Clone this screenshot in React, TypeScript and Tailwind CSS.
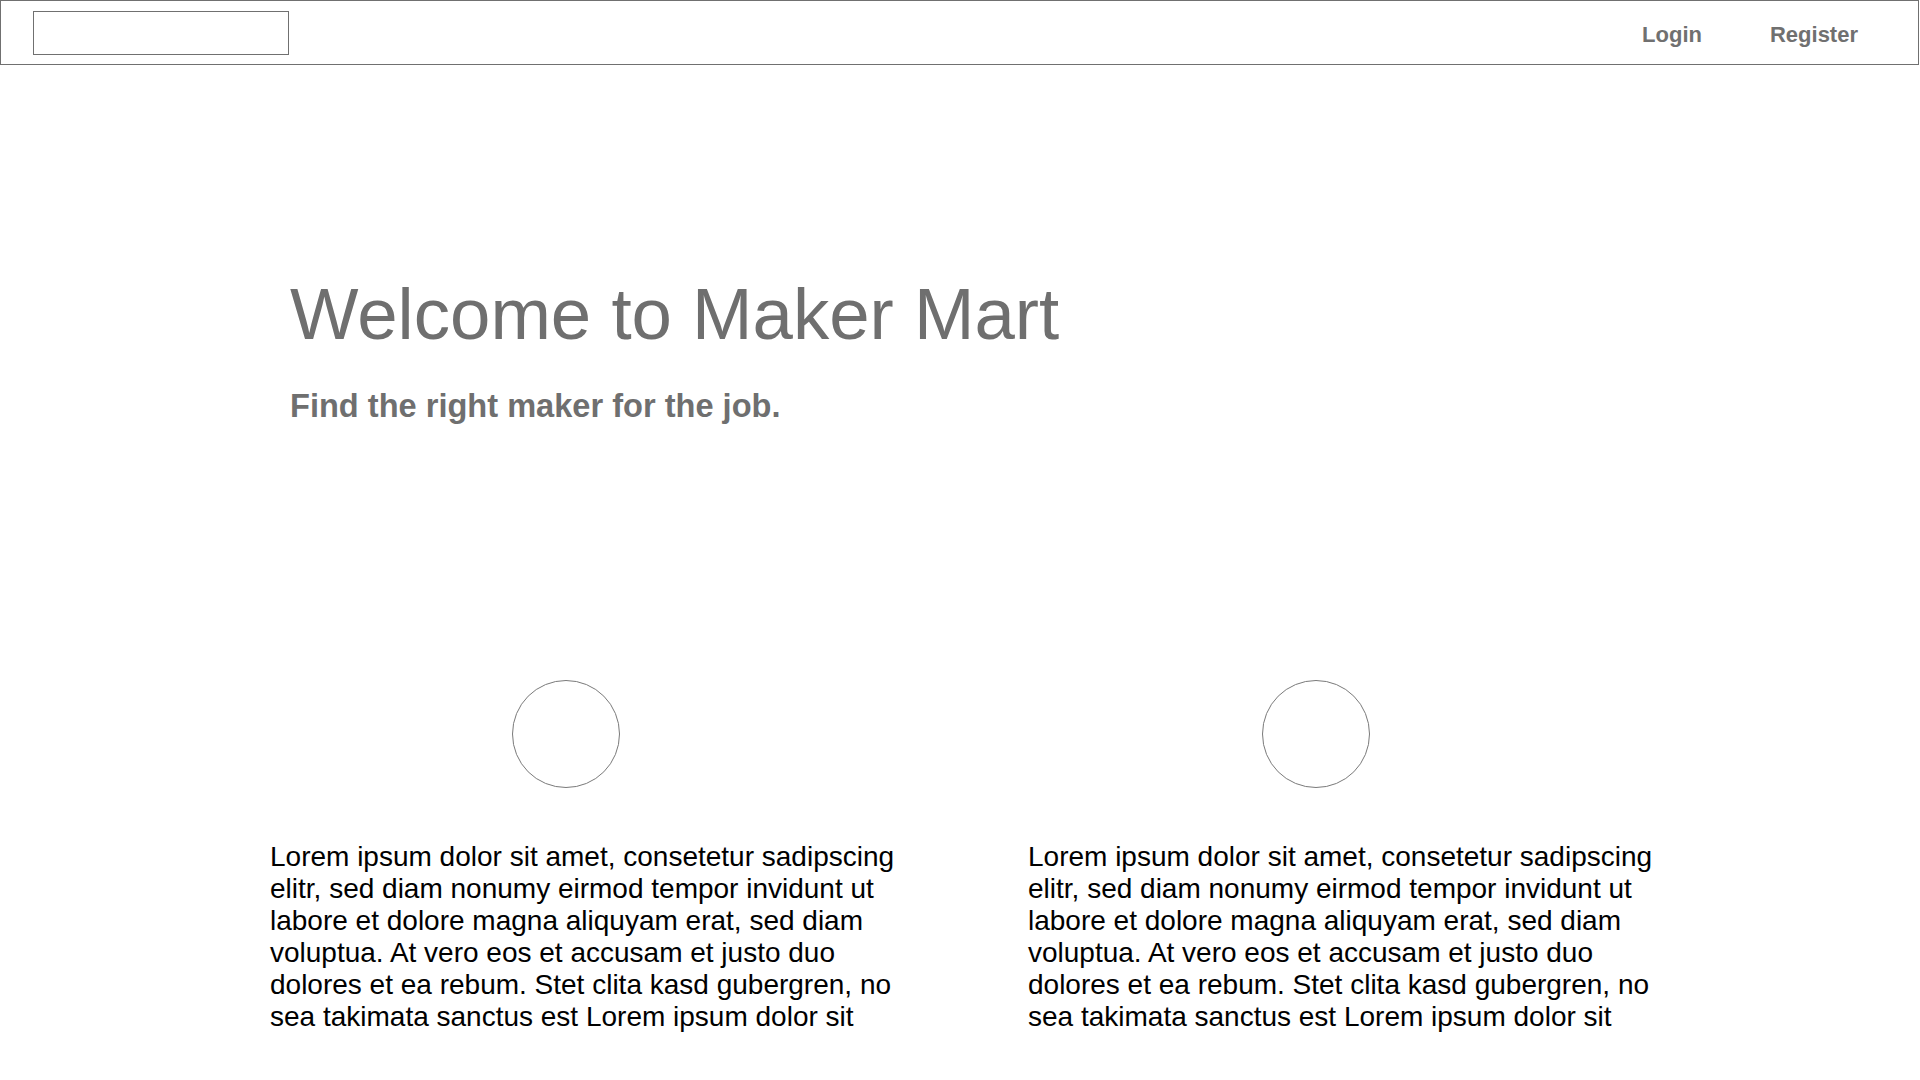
import React from 'react';

const lorem =
  'Lorem ipsum dolor sit amet, consetetur sadipscing elitr, sed diam nonumy eirmod tempor invidunt ut labore et dolore magna aliquyam erat, sed diam voluptua. At vero eos et accusam et justo duo dolores et ea rebum. Stet clita kasd gubergren, no sea takimata sanctus est Lorem ipsum dolor sit';

function Feature({ offset }: { offset: string }) {
  return (
    <div className="flex flex-col">
      <div className={`${offset} w-[108px] h-[108px] rounded-full border border-[#7a7a7a]`} />
      <p className="mt-[53px] text-[28px] leading-[32px] text-black">{lorem}</p>
    </div>
  );
}

export default function App() {
  return (
    <div className="min-h-screen w-full bg-white font-['Liberation_Sans',Arial,sans-serif]">
      {/* Top bar */}
      <header className="w-[1919px] h-[65px] border border-[#707070] flex items-center justify-between pl-[32px] pr-[60px]">
        <div className="w-[256px] h-[44px] border border-[#707070]" />
        <nav className="flex items-center gap-[68px] pt-[3px] text-[22px] font-bold text-[#707070]">
          <a>Login</a>
          <a>Register</a>
        </nav>
      </header>

      {/* Hero */}
      <section className="pl-[290px] pt-[213px] flex flex-col gap-[39px] text-[#6f6f6f]">
        <h1 className="text-[72.6px] leading-none font-normal">Welcome to Maker Mart</h1>
        <h2 className="text-[32.6px] leading-none font-bold">Find the right maker for the job.</h2>
      </section>

      {/* Features */}
      <section className="mt-[258px] pl-[270px] grid grid-cols-[640px_640px] gap-x-[118px]">
        <Feature offset="ml-[242px]" />
        <Feature offset="ml-[234px]" />
      </section>
    </div>
  );
}
